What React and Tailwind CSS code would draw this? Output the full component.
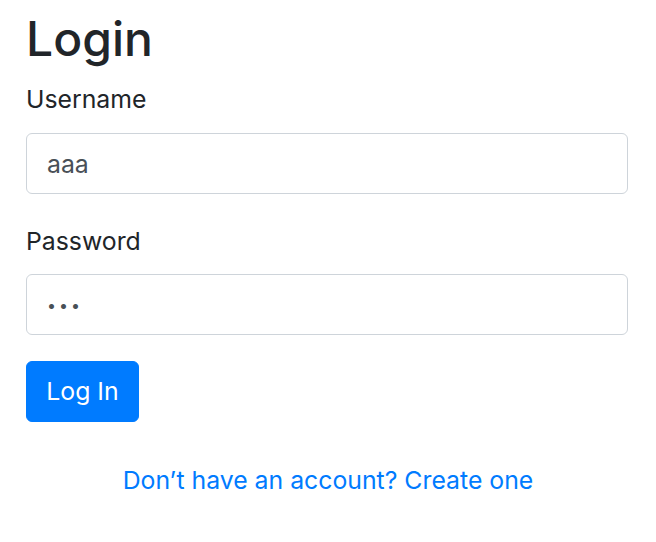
import React from "react";

export default function App() {
  return (
    <div
      className="min-h-[542px] w-full bg-white pl-[26px] pr-[28px] pt-[10px] text-[#212529]"
      style={{ fontFamily: "Inter, 'Noto Sans', Roboto, sans-serif" }}
    >
      <h1 className="m-0 text-[48px] font-medium leading-[57.6px] text-[#212529]">Login</h1>
      <form className="mt-[12px]" onSubmit={(e) => e.preventDefault()}>
        <div>
          <label className="mb-[15px] block text-[24.8px] leading-[38.4px]">Username</label>
          <input
            readOnly
            type="text"
            value="aaa"
            className="block h-[61px] w-full rounded-[6px] border border-[#ced4da] bg-white px-[20px] text-[24.8px] text-[#495057] outline-none"
          />
        </div>
        <div className="mt-[28px]">
          <label className="mb-[14px] block text-[24.8px] leading-[38.4px]">Password</label>
          <input
            readOnly
            type="password"
            value="aaa"
            className="block h-[61px] w-full rounded-[6px] border border-[#ced4da] bg-white px-[20px] text-[16px] tracking-[3px] text-[#495057] outline-none"
          />
        </div>
        <button
          type="submit"
          className="mt-[26px] flex h-[61px] w-[113px] items-center justify-center rounded-[6px] border border-[#007bff] bg-[#007bff] text-[24.8px] text-white"
        >
          Log In
        </button>
      </form>
      <div className="-ml-[26px] -mr-[28px] mt-[39px] text-center text-[24.8px] leading-[38.4px]">
        <a href="#" className="text-[#007bff] no-underline">
          Don’t have an account? Create one
        </a>
      </div>
    </div>
  );
}
